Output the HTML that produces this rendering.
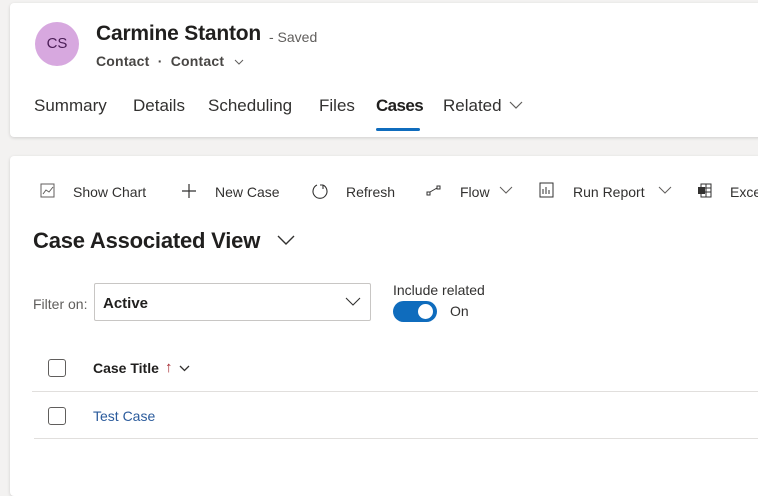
<!DOCTYPE html>
<html><head><meta charset="utf-8"><style>
*{margin:0;padding:0;box-sizing:border-box}
body{width:758px;height:487px;background:#f3f2f1;font-family:"Liberation Sans",sans-serif;color:#323130;position:relative;overflow:hidden}
.card{position:absolute;background:#fff;border-radius:4px;box-shadow:0 1px 3px rgba(0,0,0,.15)}
.a{position:absolute;white-space:nowrap}
svg{position:absolute}
</style></head><body>
<div class="card" style="left:10px;top:3px;width:760px;height:134px"></div>
<div class="card" style="left:10px;top:156px;width:760px;height:340px"></div>

<div class="a" style="left:35px;top:22px;width:44px;height:44px;border-radius:50%;background:#d7a8df;color:#4a1d56;font-size:15px;line-height:44px;text-align:center">CS</div>
<div class="a" style="left:96px;top:22px;font-size:21px;font-weight:bold;color:#201f1e;letter-spacing:-0.2px">Carmine Stanton</div>
<div class="a" style="left:269px;top:29px;font-size:14px;color:#605e5c">- Saved</div>
<div class="a" style="left:96px;top:53px;font-size:14px;font-weight:bold;color:#484644;letter-spacing:0.2px">Contact&nbsp;&nbsp;·&nbsp;&nbsp;Contact</div>
<svg style="left:234px;top:58px" width="10" height="8"><path d="M1 2l4 4 4-4" stroke="#605e5c" fill="none"/></svg>

<div class="a" style="left:34px;top:96px;font-size:17px;color:#323130">Summary</div>
<div class="a" style="left:133px;top:96px;font-size:17px">Details</div>
<div class="a" style="left:208px;top:96px;font-size:17px">Scheduling</div>
<div class="a" style="left:319px;top:96px;font-size:17px">Files</div>
<div class="a" style="left:376px;top:96px;font-size:17px;font-weight:bold;color:#201f1e;letter-spacing:-0.6px">Cases</div>
<div class="a" style="left:376px;top:128px;width:44px;height:3px;background:#0f6cbd;border-radius:2px"></div>
<div class="a" style="left:443px;top:96px;font-size:17px">Related</div>
<svg style="left:509px;top:100px" width="14" height="10"><path d="M1 2l6 6 6-6" stroke="#605e5c" fill="none" stroke-width="1.2"/></svg>

<svg style="left:40px;top:183px" width="15" height="15"><rect x="1" y="1" width="13" height="13" fill="none" stroke="#605e5c"/><path d="M3 11l3-4 3 2 4-5" stroke="#605e5c" fill="none"/></svg>
<div class="a" style="left:73px;top:184px;font-size:14px">Show Chart</div>
<svg style="left:181px;top:183px" width="16" height="16"><path d="M8 1v14M1 8h14" stroke="#323130" stroke-width="1.2"/></svg>
<div class="a" style="left:215px;top:184px;font-size:14px">New Case</div>
<svg style="left:311px;top:182px" width="18" height="18"><path d="M6 3A7 7 0 1 0 12 3M12 3v4M12 3h-3" stroke="#323130" fill="none" stroke-width="1.1"/></svg>
<div class="a" style="left:346px;top:184px;font-size:14px">Refresh</div>
<svg style="left:426px;top:185px" width="16" height="12"><rect x="1" y="7" width="3" height="3" fill="none" stroke="#323130"/><rect x="11" y="1" width="3" height="3" fill="none" stroke="#323130"/><path d="M4 7l7-4" stroke="#323130"/></svg>
<div class="a" style="left:460px;top:184px;font-size:14px">Flow</div>
<svg style="left:499px;top:186px" width="14" height="9"><path d="M1 1l6 6 6-6" stroke="#605e5c" fill="none"/></svg>
<svg style="left:539px;top:182px" width="15" height="16"><rect x="1" y="1" width="13" height="14" fill="none" stroke="#323130"/><path d="M4 12V7M7 12V5M10 12V8" stroke="#323130"/></svg>
<div class="a" style="left:573px;top:184px;font-size:14px">Run Report</div>
<svg style="left:658px;top:186px" width="14" height="9"><path d="M1 1l6 6 6-6" stroke="#605e5c" fill="none"/></svg>
<svg style="left:697px;top:183px" width="15" height="15"><rect x="4" y="1" width="10" height="13" fill="none" stroke="#323130"/><path d="M4 5h10M4 9h10M9 1v13" stroke="#323130"/><rect x="1" y="4" width="7" height="7" fill="#323130"/></svg>
<div class="a" style="left:730px;top:184px;font-size:14px">Excel</div>

<div class="a" style="left:33px;top:228px;font-size:22px;font-weight:bold;color:#201f1e;letter-spacing:-0.2px">Case Associated View</div>
<svg style="left:276px;top:234px" width="20" height="12"><path d="M2 2l8 8 8-8" stroke="#323130" fill="none" stroke-width="1.4"/></svg>

<div class="a" style="left:33px;top:296px;font-size:14px;color:#605e5c">Filter on:</div>
<div class="a" style="left:94px;top:283px;width:277px;height:38px;border:1px solid #c8c6c4;border-radius:2px"></div>
<div class="a" style="left:103px;top:295px;font-size:15px;font-weight:bold;color:#201f1e">Active</div>
<svg style="left:345px;top:297px" width="16" height="10"><path d="M1 1l7 7 7-7" stroke="#323130" fill="none" stroke-width="1.1"/></svg>

<div class="a" style="left:393px;top:282px;font-size:14px">Include related</div>
<div class="a" style="left:393px;top:301px;width:44px;height:21px;border-radius:11px;background:#0f6cbd"></div>
<div class="a" style="left:418px;top:304px;width:15px;height:15px;border-radius:50%;background:#fff"></div>
<div class="a" style="left:450px;top:303px;font-size:14px">On</div>

<div class="a" style="left:48px;top:359px;width:18px;height:18px;border:1px solid #605e5c;border-radius:3px"></div>
<div class="a" style="left:93px;top:360px;font-size:14px;font-weight:bold;color:#201f1e">Case Title</div>
<div class="a" style="left:165px;top:359px;font-size:15px;color:#a4262c">↑</div>
<svg style="left:179px;top:365px" width="11" height="7"><path d="M1 1l4.5 4.5L10 1" stroke="#323130" fill="none" stroke-width="1.3"/></svg>
<div class="a" style="left:32px;top:391px;width:740px;height:1px;background:#e1dfdd"></div>
<div class="a" style="left:48px;top:407px;width:18px;height:18px;border:1px solid #605e5c;border-radius:3px"></div>
<div class="a" style="left:93px;top:408px;font-size:14px;color:#2b5b9c">Test Case</div>
<div class="a" style="left:34px;top:438px;width:740px;height:1px;background:#e1dfdd"></div>
</body></html>
